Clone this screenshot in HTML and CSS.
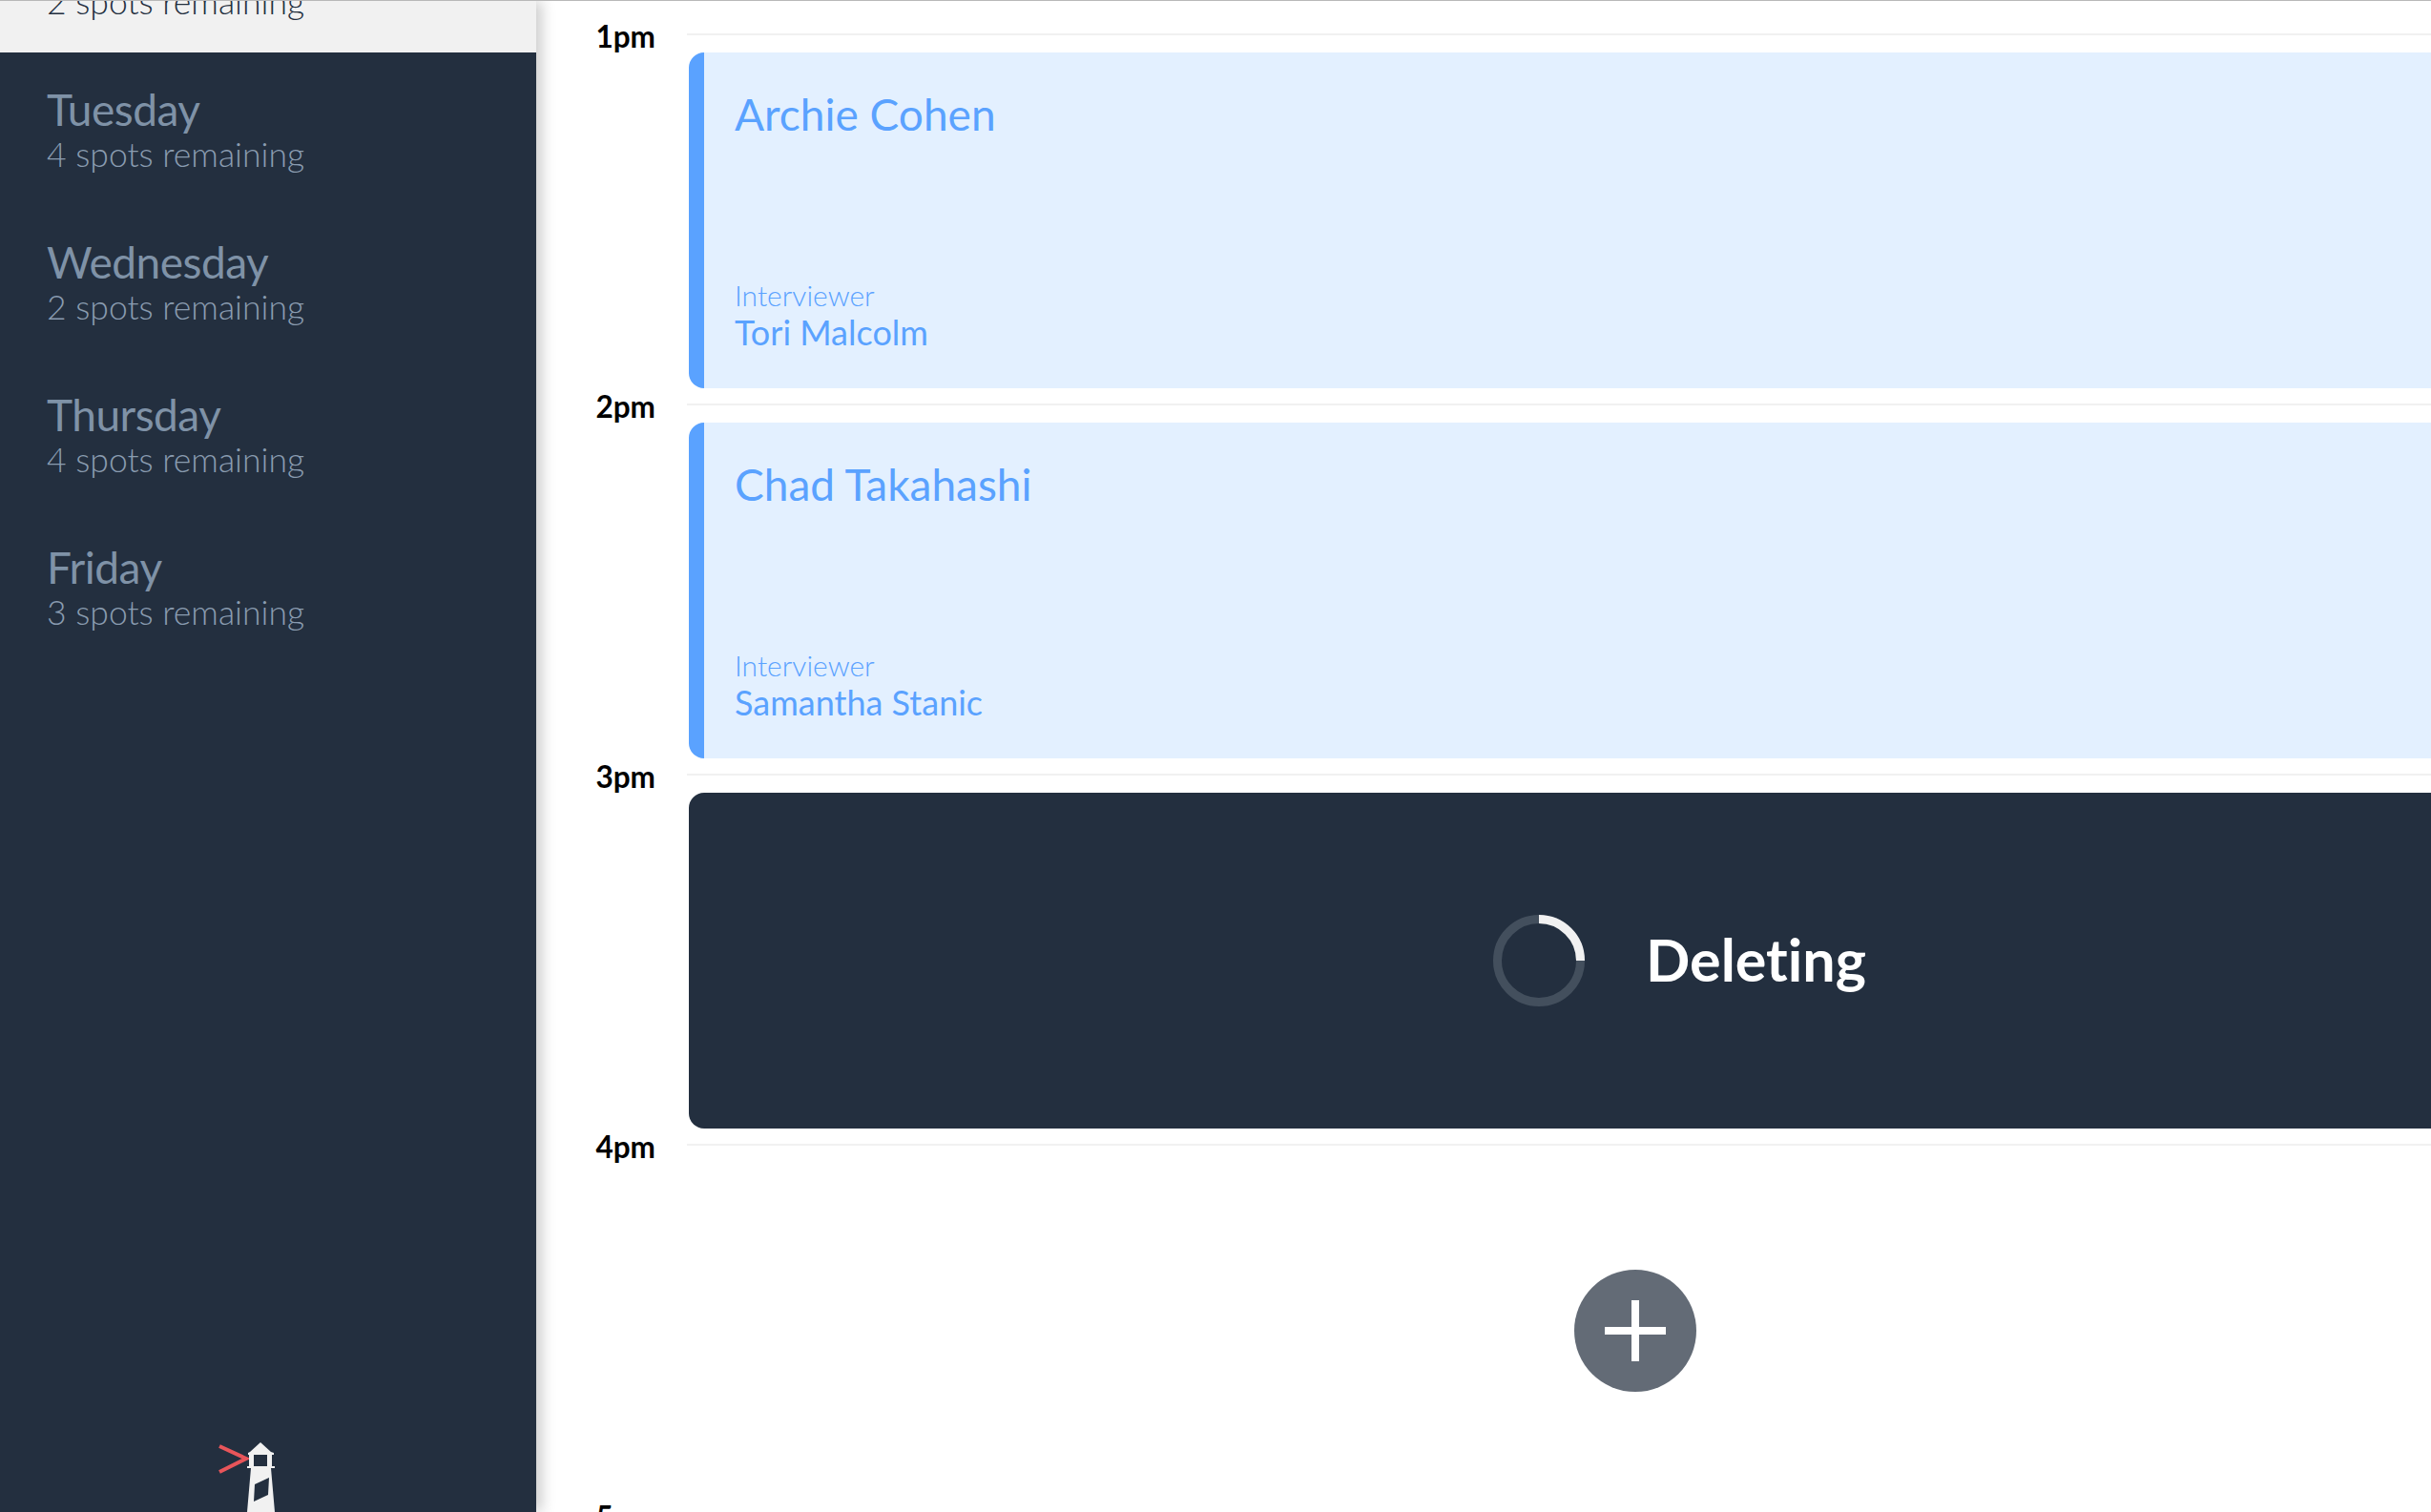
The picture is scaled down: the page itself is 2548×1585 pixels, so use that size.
FILE: index.html
```html
<!DOCTYPE html>
<html lang="en">
<head>
  <meta charset="UTF-8">
  <title>Interview Scheduler</title>
  <link rel="stylesheet" href="styles.css">
</head>
<body>
  <div class="layout">
    <nav class="sidebar">
      <ul class="day-list">
        <li class="day day--selected"><h2>Monday</h2><h3>2 spots remaining</h3></li>
        <li class="day"><h2>Tuesday</h2><h3>4 spots remaining</h3></li>
        <li class="day"><h2>Wednesday</h2><h3>2 spots remaining</h3></li>
        <li class="day"><h2>Thursday</h2><h3>4 spots remaining</h3></li>
        <li class="day"><h2>Friday</h2><h3>3 spots remaining</h3></li>
      </ul>
      <svg class="logo" width="60" height="74" viewBox="0 0 60 74">
        <path d="M1 5 L29 18 L1 32" fill="none" stroke="#e8555a" stroke-width="4"/>
        <path d="M44 1 L55 11 L58 12 L58 14 L31 14 L31 12 L33 11 Z M32 14 H37 V26 H32 Z M51 14 H56 V26 H51 Z M30 26 H59 V28 H30 Z" fill="#f1f1f1"/>
        <path fill-rule="evenodd" d="M34 28 H55 L59 74 H30 Z M38 45 L53 38 L52 56 L37 63 Z" fill="#f1f1f1"/>
      </svg>
    </nav>
    <main class="schedule">
      <article class="slot">
        <div class="time">1pm</div>
        <div class="slot-body">
          <div class="appointment">
            <div class="student">Archie Cohen</div>
            <div><div class="label">Interviewer</div><div class="interviewer">Tori Malcolm</div></div>
          </div>
        </div>
      </article>
      <article class="slot">
        <div class="time">2pm</div>
        <div class="slot-body">
          <div class="appointment">
            <div class="student">Chad Takahashi</div>
            <div><div class="label">Interviewer</div><div class="interviewer">Samantha Stanic</div></div>
          </div>
        </div>
      </article>
      <article class="slot">
        <div class="time">3pm</div>
        <div class="slot-body">
          <div class="status">
            <svg class="spinner" width="96" height="96" viewBox="0 0 96 96">
              <circle cx="48" cy="48" r="43.5" fill="none" stroke="#434f5d" stroke-width="9"/>
              <path d="M48 4.5 A43.5 43.5 0 0 1 91.500 48" fill="none" stroke="#f1f1f1" stroke-width="9"/>
            </svg>
            <span class="status-text">Deleting</span>
          </div>
        </div>
      </article>
      <article class="slot">
        <div class="time">4pm</div>
        <div class="slot-body">
          <div class="empty">
            <button class="add">
              <svg width="64" height="64" viewBox="0 0 64 64"><path d="M28 0 H36 V28 H64 V36 H36 V64 H28 V36 H0 V28 H28 Z" fill="#fff"/></svg>
            </button>
          </div>
        </div>
      </article>
      <article class="slot">
        <div class="time">5pm</div>
        <div class="slot-body"></div>
      </article>
    </main>
  </div>
</body>
</html>
```

FILE: styles.css
```css
* {
  box-sizing: border-box;
}
html, body {
  height: 100%;
}
body {
  margin: 0;
  overflow: hidden;
  background: #fff;
  border-top: 1px solid #b8b8b8;
  font-family: Lato, "Open Sans", sans-serif;
  font-variant-ligatures: none;
}
.layout {
  display: flex;
  height: 100%;
}
.sidebar {
  position: relative;
  z-index: 1;
  flex: 0 0 562px;
  overflow: hidden;
  background: #232f3f;
  box-shadow: 6px 0 14px rgba(0, 0, 0, 0.2);
}
.day-list {
  list-style: none;
  margin: -106px 0 0;
  padding: 0;
}
.day {
  height: 160px;
  padding: 33px 0 0 49px;
  color: #7f92a7;
}
.day--selected {
  background: #f1f1f1;
  color: #232f3f;
}
.day h2 {
  margin: 0;
  font-size: 46px;
  font-weight: 400;
  letter-spacing: -0.5px;
  line-height: 54px;
}
.day h3 {
  margin: 0;
  font-size: 35.500px;
  font-weight: 300;
  line-height: 40px;
  color: #8a9cb0;
}
.day--selected h3 {
  color: #232f3f;
}
.logo {
  position: absolute;
  left: 229px;
  bottom: 0;
}
.schedule {
  flex: 1;
  min-width: 0;
  overflow: hidden;
  padding-top: 34px;
}
.slot {
  display: grid;
  grid-template-columns: 158px 1986px;
  height: 388px;
}
.time {
  padding: 0 33px 0 0;
  margin-top: -17px;
  text-align: right;
  font-size: 31.500px;
  font-weight: 700;
  line-height: 40px;
  color: #000;
}
.slot-body {
  border-top: 2px solid #f1f1f1;
  padding: 18px 0 16px 2px;
}
.appointment {
  display: flex;
  flex-direction: column;
  justify-content: space-between;
  height: 352px;
  padding: 37px 32px 38px;
  background: #e3f0ff;
  border-left: 16px solid #5aa2ff;
  border-radius: 16px 0 0 16px;
  color: #5aa2ff;
}
.student {
  font-size: 46px;
  line-height: 56px;
}
.label {
  font-size: 30px;
  font-weight: 300;
  line-height: 36px;
}
.interviewer {
  font-size: 36px;
  line-height: 42px;
}
.status {
  display: flex;
  align-items: center;
  justify-content: center;
  gap: 64px;
  height: 352px;
  padding-left: 93px;
  background: #232f3f;
  border-radius: 16px 0 0 16px;
  color: #fff;
}
.status-text {
  font-size: 61px;
  font-weight: 700;
  line-height: 72px;
  margin-top: -2px;
}
.empty {
  display: flex;
  align-items: center;
  justify-content: center;
  height: 352px;
}
.add {
  display: flex;
  align-items: center;
  justify-content: center;
  width: 128px;
  height: 128px;
  padding: 0;
  border: 0;
  border-radius: 50%;
  background: #636b76;
}
```
